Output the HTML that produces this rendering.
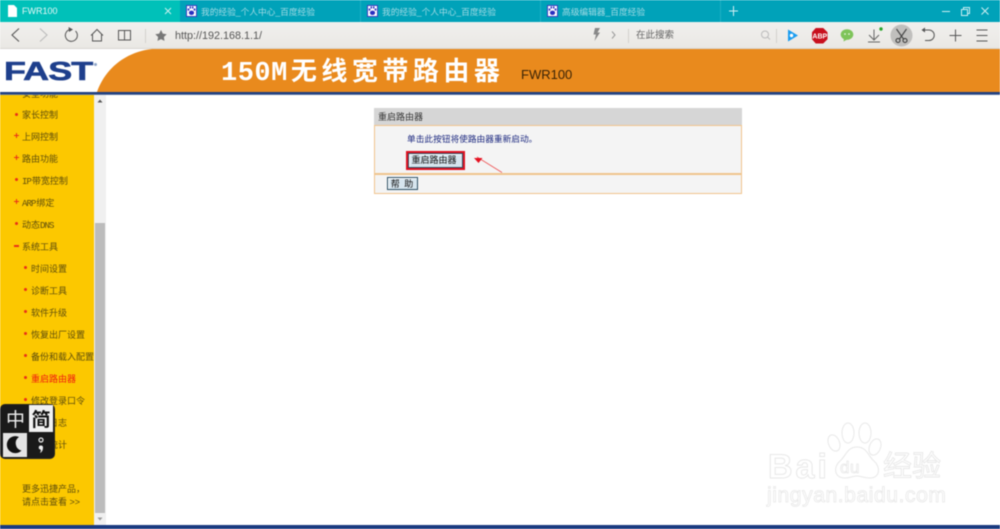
<!DOCTYPE html>
<html><head><meta charset="utf-8">
<style>
*{margin:0;padding:0;box-sizing:border-box}
html,body{width:1000px;height:529px;overflow:hidden;background:#fff;font-family:"Liberation Sans","Noto Sans CJK SC",sans-serif}
.a{position:absolute;white-space:nowrap}
#root{position:relative;width:1000px;height:529px;overflow:hidden;filter:blur(.45px)}
.tab{position:absolute;top:0;height:22px;background:#00a2b9;border-right:1px solid #1fb0c4;color:#a3dbe5;font-size:8.7px;line-height:22px}
.tab b{position:absolute;left:21px;top:1px;font-weight:normal}
.paw{position:absolute;left:6px;top:5px;width:11px;height:12px;background:#fff;border:1px solid #3a3fc0}
.paw svg{display:block}
.m{position:absolute;font-size:9px;color:#5f4e0c;white-space:nowrap;line-height:12px;margin-top:1px}
.m i{font:9px "Liberation Mono",monospace;letter-spacing:-.9px;margin-right:.9px}
.d{position:absolute;width:3px;height:3px;background:#e8301a;border-radius:50%}
.p{position:absolute;width:5px;height:5px}
.p:before{content:"";position:absolute;left:0;top:2px;width:5px;height:1.4px;background:#e8301a}
.p:after{content:"";position:absolute;left:2px;top:0;width:1.4px;height:5px;background:#e8301a}
.btn{position:absolute;background:#cfe0ea;border:1px solid #2c4f63;box-shadow:inset 1px 1px 0 #fff;font-size:9px;color:#111;text-align:center}
</style></head><body><div id="root">

<!-- tab strip -->
<div class="a" style="left:0;top:0;width:1000px;height:22px;background:#00a2b9"></div>
<div class="a" style="left:0;top:0;width:180px;height:22px;background:#00c1b9"></div>
<svg class="a" style="left:8px;top:5px" width="9" height="12"><path d="M0 0H6L9 3V12H0Z" fill="#fff"/></svg>
<div class="a" style="left:22px;top:0;font-size:9px;line-height:22px;color:#e6f8f7">FWR100</div>
<svg class="a" style="left:164px;top:7px" width="8" height="8"><path d="M1 1L7 7M7 1L1 7" stroke="#c8f0ee" stroke-width="1"/></svg>

<div class="tab" style="left:180px;width:181px"><span class="paw"><svg width="9" height="10" viewBox="0 0 9 10"><g fill="#2a2fc0"><ellipse cx="1.500" cy="3.500" rx=".9" ry="1.300"/><ellipse cx="7.500" cy="3.500" rx=".9" ry="1.300"/><ellipse cx="3.300" cy="1.500" rx=".8" ry="1.200"/><ellipse cx="5.700" cy="1.500" rx=".8" ry="1.200"/><ellipse cx="4.500" cy="6.800" rx="2.600" ry="2.200"/></g></svg></span><b>我的经验_个人中心_百度经验</b></div>
<div class="tab" style="left:361px;width:180px"><span class="paw"><svg width="9" height="10" viewBox="0 0 9 10"><g fill="#2a2fc0"><ellipse cx="1.500" cy="3.500" rx=".9" ry="1.300"/><ellipse cx="7.500" cy="3.500" rx=".9" ry="1.300"/><ellipse cx="3.300" cy="1.500" rx=".8" ry="1.200"/><ellipse cx="5.700" cy="1.500" rx=".8" ry="1.200"/><ellipse cx="4.500" cy="6.800" rx="2.600" ry="2.200"/></g></svg></span><b>我的经验_个人中心_百度经验</b></div>
<div class="tab" style="left:541px;width:180px"><span class="paw"><svg width="9" height="10" viewBox="0 0 9 10"><g fill="#2a2fc0"><ellipse cx="1.500" cy="3.500" rx=".9" ry="1.300"/><ellipse cx="7.500" cy="3.500" rx=".9" ry="1.300"/><ellipse cx="3.300" cy="1.500" rx=".8" ry="1.200"/><ellipse cx="5.700" cy="1.500" rx=".8" ry="1.200"/><ellipse cx="4.500" cy="6.800" rx="2.600" ry="2.200"/></g></svg></span><b>高级编辑器_百度经验</b></div>
<svg class="a" style="left:728px;top:5px" width="12" height="12"><path d="M5.500 1V11M1 6H10" stroke="#d5f0f4" stroke-width="1"/></svg>
<svg class="a" style="left:940px;top:5px" width="60" height="12"><path d="M2 6.500H10" stroke="#cdeef2"/><path d="M21.500 4.500H27.500V10.500H21.500ZM23.500 4.500V2.500H29.500V8.500H27.500" stroke="#cdeef2" fill="none"/><path d="M41.500 2.500L48.500 9.500M48.500 2.500L41.500 9.500" stroke="#cdeef2"/></svg>

<!-- toolbar -->
<div class="a" style="left:0;top:22px;width:1000px;height:27px;background:linear-gradient(#f1f0ee,#eae8e4);border-bottom:1px solid #d8d6d2"></div>
<svg class="a" style="left:0;top:22px" width="300" height="27" fill="none" stroke="#555">
<path d="M19 6.500L12 13L19 19.500" stroke-width="1.100"/>
<path d="M40 6.500L47 13L40 19.500" stroke="#bbb" stroke-width="1.100"/>
<path d="M75.500 9A6 6 0 1 1 70 7.500" stroke-width="1"/><path d="M68.500 5L73 7.500L69 10" fill="#555" stroke="none"/>
<path d="M91 13.500L97 7.500L103 13.500M92.500 12.500V19H101.500V12.500" stroke-width="1"/>
<path d="M118.500 8.500H124.500V18H118.500ZM124.500 8.500H130.500V18H124.500Z" stroke-width="1"/>
<path d="M145.500 7V21" stroke="#d3d1cd"/>
<path d="M161 8L162.800 11.600L166.700 12.200L163.900 15L164.500 18.900L161 17.100L157.500 18.900L158.100 15L155.300 12.200L159.200 11.600Z" fill="#777" stroke="none"/>
</svg>
<div class="a" style="left:175px;top:22.500px;font-size:10.800px;line-height:27px;color:#555">http://192.168.1.1/</div>
<svg class="a" style="left:585px;top:22px" width="200" height="27" fill="none">
<path d="M10 6H15L12.500 10.500H15L9.500 19L11 12.500H8.500Z" fill="#888"/>
<path d="M27 9.500L30 13L27 16.500" stroke="#999"/>
<path d="M43.500 7V21" stroke="#d3d1cd"/>
<circle cx="180" cy="12.500" r="3.500" stroke="#bbb"/><path d="M182.500 15L185 17.500" stroke="#bbb"/>
<path d="M191.500 7V21" stroke="#d3d1cd"/>
</svg>
<div class="a" style="left:636px;top:22px;font-size:9.500px;line-height:27px;color:#666">在此搜索</div>
<svg class="a" style="left:780px;top:22px" width="220" height="27" fill="none">
<path d="M8 7.500L18 13.500L8 19.500Z" fill="#1a9cf0"/><circle cx="11.500" cy="13.500" r="1.700" fill="#fff"/>
<path d="M36 6.500H43L47 10.500V17L43 21H36L32.500 17V10.500Z" fill="#c8101e" stroke="#c8101e" stroke-linejoin="round"/>
<text x="39.800" y="16.500" font-size="7" font-weight="bold" fill="#fff" text-anchor="middle" font-family="Liberation Sans">ABP</text>
<ellipse cx="67" cy="12.500" rx="6.300" ry="5.300" fill="#7ec45a"/><path d="M64 16L63.500 19.500L68 17Z" fill="#7ec45a"/><circle cx="65" cy="12" r=".8" fill="#fff"/><circle cx="69" cy="12" r=".8" fill="#fff"/>
<path d="M94 7.500V18M89 13L94 18L99 13M88 20H100" stroke="#666"/><circle cx="101" cy="7" r="1.700" fill="#2aa52a"/>
<circle cx="121.500" cy="13.500" r="11" fill="#c0bfbd"/>
<path d="M116.500 7L123.500 17M126.500 7L119.500 17" stroke="#444" stroke-width="1.100"/><circle cx="118" cy="18.500" r="2" stroke="#333"/><circle cx="125" cy="18.500" r="2" stroke="#333"/>
<path d="M143 8H149A5 5 0 0 1 149 18.500H145" stroke="#555" stroke-width="1"/><path d="M145 5.500L141.500 8L145 10.500Z" fill="#555"/>
<path d="M175.500 7.500V19.500M169.500 13.500H181.500" stroke="#555"/>
<path d="M196.500 8H207.500M196.500 13.500H207.500M196.500 19H207.500" stroke="#555"/>
</svg>

<!-- router page header -->
<div class="a" style="left:0;top:49px;width:1000px;height:43px;background:#e98a1d"></div>
<svg class="a" style="left:0;top:49px" width="160" height="43"><path d="M0 0H152C125 3 105 20 97 43H0Z" fill="#fff"/></svg>
<div class="a" style="left:3.500px;top:57px;font-size:26px;line-height:28px;font-weight:bold;color:#1e3f8c;transform:scaleX(1.38);transform-origin:left;-webkit-text-stroke:.6px #1e3f8c;letter-spacing:-.6px">FAST</div>
<div class="a" style="left:94px;top:63px;width:3px;height:3px;border-radius:50%;background:#8fa5c8"></div>
<div class="a" style="left:221px;top:56px;line-height:30px;font-weight:bold;color:#fff;font-size:26px"><span style="font:bold 27px/30px 'Liberation Mono',monospace;letter-spacing:.5px">150M</span><span style="letter-spacing:4.500px;margin-left:3px">无线宽带路由器</span></div>
<div class="a" style="left:521px;top:67px;font-size:13px;line-height:16px;color:#3a2306">FWR100</div>
<div class="a" style="left:0;top:92px;width:1000px;height:3px;background:linear-gradient(#1f3f7f,#1f3f7f 66%,#8d9dbd)"></div>

<!-- sidebar -->
<div class="a" style="left:0;top:95px;width:94px;height:430px;background:#fcc800;overflow:hidden" id="side">
<div class="m" style="left:22px;top:-8px">安全功能</div>
<div class="d" style="left:15px;top:18px"></div><div class="m" style="left:22px;top:13px">家长控制</div>
<div class="p" style="left:14px;top:38px"></div><div class="m" style="left:22px;top:35px">上网控制</div>
<div class="p" style="left:14px;top:60px"></div><div class="m" style="left:22px;top:57px">路由功能</div>
<div class="d" style="left:15px;top:83px"></div><div class="m" style="left:22px;top:79px"><i>IP</i>带宽控制</div>
<div class="p" style="left:14px;top:104px"></div><div class="m" style="left:22px;top:101px"><i>ARP</i>绑定</div>
<div class="d" style="left:15px;top:127px"></div><div class="m" style="left:22px;top:123px">动态<i>DNS</i></div>
<div class="a" style="left:14px;top:150px;width:5px;height:1.500px;background:#e8301a"></div><div class="m" style="left:22px;top:145px">系统工具</div>
<div class="d" style="left:24px;top:171px"></div><div class="m" style="left:31px;top:167px">时间设置</div>
<div class="d" style="left:24px;top:193px"></div><div class="m" style="left:31px;top:189px">诊断工具</div>
<div class="d" style="left:24px;top:215px"></div><div class="m" style="left:31px;top:211px">软件升级</div>
<div class="d" style="left:24px;top:237px"></div><div class="m" style="left:31px;top:233px">恢复出厂设置</div>
<div class="d" style="left:24px;top:259px"></div><div class="m" style="left:31px;top:255px">备份和载入配置</div>
<div class="d" style="left:24px;top:281px"></div><div class="m" style="left:31px;top:277px;color:#f01a10">重启路由器</div>
<div class="d" style="left:24px;top:303px"></div><div class="m" style="left:31px;top:299px">修改登录口令</div>
<div class="m" style="left:31px;top:321px">系统日志</div>
<div class="m" style="left:31px;top:343px">流量统计</div>
<div class="m" style="left:22px;top:387px">更多迅捷产品，</div>
<div class="m" style="left:22px;top:400px">请点击查看 &gt;&gt;</div>
</div>
<!-- scrollbar -->
<div class="a" style="left:94px;top:95px;width:12px;height:430px;background:#f0f0f0"></div>
<div class="a" style="left:95px;top:223px;width:10px;height:290px;background:#bcbcbc"></div>
<svg class="a" style="left:95px;top:98px" width="10" height="6"><path d="M2.500 4.500L5 1.500L7.500 4.500Z" fill="#555"/></svg>
<svg class="a" style="left:95px;top:516px" width="10" height="6"><path d="M2.500 1.500L5 4.500L7.500 1.500Z" fill="#999"/></svg>
<div class="a" style="left:0;top:525px;width:1000px;height:4px;background:#1a3a80"></div>

<!-- zh widget -->
<div class="a" style="left:0;top:404px;width:55px;height:55px;background:#1a1a1a;border-radius:5px;border:1px solid #222"></div>
<div class="a" style="left:29px;top:405px;width:24px;height:27px;background:#f1f1f1"></div>
<div class="a" style="left:3px;top:433px;width:24px;height:24px;background:#e4e4e4"></div>
<div class="a" style="left:3px;top:405px;width:25px;font-size:19px;line-height:27px;color:#eee;text-align:center;font-family:'Noto Sans CJK SC',sans-serif">中</div>
<div class="a" style="left:29px;top:405px;width:24px;font-size:19px;line-height:27px;color:#111;font-weight:bold;text-align:center;font-family:'Noto Sans CJK SC',sans-serif">简</div>
<svg class="a" style="left:2px;top:432px" width="52" height="26"><path d="M17 5A8.500 8.500 0 1 0 19.500 18.500A7.500 7.500 0 0 1 17 5Z" fill="#111"/><circle cx="39" cy="8" r="2" fill="none" stroke="#eee" stroke-width="1.200"/><path d="M39 13.500a2 2 0 0 1 2 2C41 18 40 20 38 21C39 19 39 18 38.500 17.500A2 2 0 0 1 39 13.500Z" fill="#eee"/></svg>

<!-- panel -->
<div class="a" style="left:374px;top:108px;width:368px;height:17px;background:#d6d6d6"></div>
<div class="a" style="left:378px;top:109px;font-size:9px;line-height:17px;color:#333">重启路由器</div>
<div class="a" style="left:373.500px;top:124.500px;width:368.500px;height:69px;background:#f4f4f4;border:1.500px solid #f0c48d"></div>
<div class="a" style="left:374px;top:173px;width:368px;height:2px;background:#f0c48d"></div>
<div class="a" style="left:407px;top:133px;font-size:8.700px;line-height:13px;color:#1e2a80">单击此按钮将使路由器重新启动。</div>
<div class="a" style="left:406px;top:151px;width:59px;height:19px;border:2px solid #e01020"></div>
<div class="btn" style="left:408px;top:153px;width:55px;height:15px;line-height:13px;padding-right:3px;background:#d6e5ee">重启路由器</div>
<div class="btn" style="left:387px;top:177px;width:31px;height:13px;line-height:12px;letter-spacing:1px;background:#d6e5ee">帮 助</div>
<svg class="a" style="left:470px;top:152px" width="36" height="24"><path d="M7 5L32 20.500" stroke="#ee5555" stroke-width=".8"/><path d="M4 6L12.500 6L8.500 11Z" fill="#e51020"/></svg>

<!-- watermark -->
<svg class="a" style="left:0;top:0" width="1000" height="529" fill="#fff" stroke="#e8e8e8" stroke-width="1">
<ellipse cx="834" cy="443" rx="5.500" ry="8.500" transform="rotate(-22 834 443)"/>
<ellipse cx="848" cy="433" rx="6" ry="10"/>
<ellipse cx="865" cy="433" rx="6" ry="10"/>
<ellipse cx="875" cy="447" rx="5.500" ry="8.500" transform="rotate(22 875 447)"/>
<path d="M857 447C847 447 846 456 840 461C833 467 834 478 845 478C850 478 853 476 857 476C861 476 864 478 870 478C880 478 881 467 874 461C868 456 867 447 857 447Z"/>
<text x="768" y="478" font-family="Liberation Sans" font-size="34" font-weight="bold" letter-spacing="3">Bai</text>
<text x="840" y="473" font-family="Liberation Sans" font-size="17" stroke-width=".8" letter-spacing=".5">du</text>
<text x="883" y="476" font-family="Noto Sans CJK SC" font-size="29" stroke-width=".9">经验</text>
<text x="767" y="502" font-family="Liberation Sans" font-size="21" stroke-width=".8" letter-spacing=".6">jingyan.baidu.com</text>
</svg>
</div></body></html>
